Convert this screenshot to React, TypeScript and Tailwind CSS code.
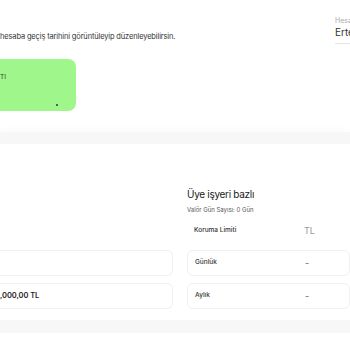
import React from 'react';

const font = { fontFamily: 'Inter, "Noto Sans", sans-serif' };

const LimitRow = ({ label, value }: { label: string; value: string }) => (
  <div className="flex h-[26px] items-center rounded-md border border-[#f0f0f0] px-[7px]">
    <span className="w-[110px] text-[6.5px] font-medium text-[#333]">{label}</span>
    <span className="text-[9px] text-[#666]">{value}</span>
  </div>
);

const App: React.FC = () => {
  return (
    <div className="relative h-[350px] w-[350px] overflow-hidden bg-white" style={font}>
      {/* Header */}
      <div className="flex h-[132px] justify-between">
        <div className="pt-[31px]">
          <p className="text-[7.5px] leading-[11px] tracking-[-0.02em] text-[#333]">
            hesaba geçiş tarihini görüntüleyip düzenleyebilirsin.
          </p>
          <div className="relative mt-[17px] h-[52px] w-[76px] rounded-r-lg bg-[#9ff68b]">
            <span className="absolute left-0 top-[14px] text-[6.5px] text-[#333]">TI</span>
            <span className="absolute left-[56px] top-[45px] h-[2px] w-[2px] rounded-full bg-[#333]" />
          </div>
        </div>
        <div className="w-[15px] overflow-hidden pt-[16px]">
          <div className="text-[7px] leading-[9px] text-[#aaa]">Hesap</div>
          <div className="mt-[1px] text-[10px] leading-[13px] text-[#333]">Erteleme</div>
          <div className="mt-[4px] h-px w-[40px] bg-[#e5e5e5]" />
        </div>
      </div>

      {/* Band */}
      <div className="h-[12px] bg-[#f7f7f7] shadow-[0_-3px_6px_rgba(0,0,0,0.02)]" />

      {/* Limits */}
      <div className="flex h-[176px] gap-[14px] pt-[106px]">
        <div className="flex w-[173px] flex-col gap-[7px]">
          <div className="h-[26px] rounded-r-md border border-l-0 border-[#f0f0f0]" />
          <div className="flex h-[26px] items-center rounded-r-md border border-l-0 border-[#f0f0f0]">
            <span className="text-[7.5px] font-semibold tracking-[-0.01em] text-[#222]">,000,00 TL</span>
          </div>
        </div>
        <div className="flex flex-1 flex-col gap-[7px]">
          <LimitRow label="Günlük" value="-" />
          <LimitRow label="Aylık" value="-" />
        </div>
      </div>

      <div className="absolute left-[187px] top-[187px]">
        <h2 className="text-[10px] leading-[14px] tracking-[-0.03em] text-[#222]">Üye işyeri bazlı</h2>
        <p className="mt-[5px] text-[6px] leading-[8px] text-[#555]">Valör Gün Sayısı: 0 Gün</p>
        <div className="mt-[10px] flex items-center px-[7px]">
          <span className="w-[110px] text-[6.5px] font-medium text-[#333]">Koruma Limiti</span>
          <span className="text-[9px] text-[#999]">TL</span>
        </div>
      </div>

      {/* Bottom band */}
      <div className="h-[13px] bg-[#f7f7f7]" />
    </div>
  );
};

export default App;
